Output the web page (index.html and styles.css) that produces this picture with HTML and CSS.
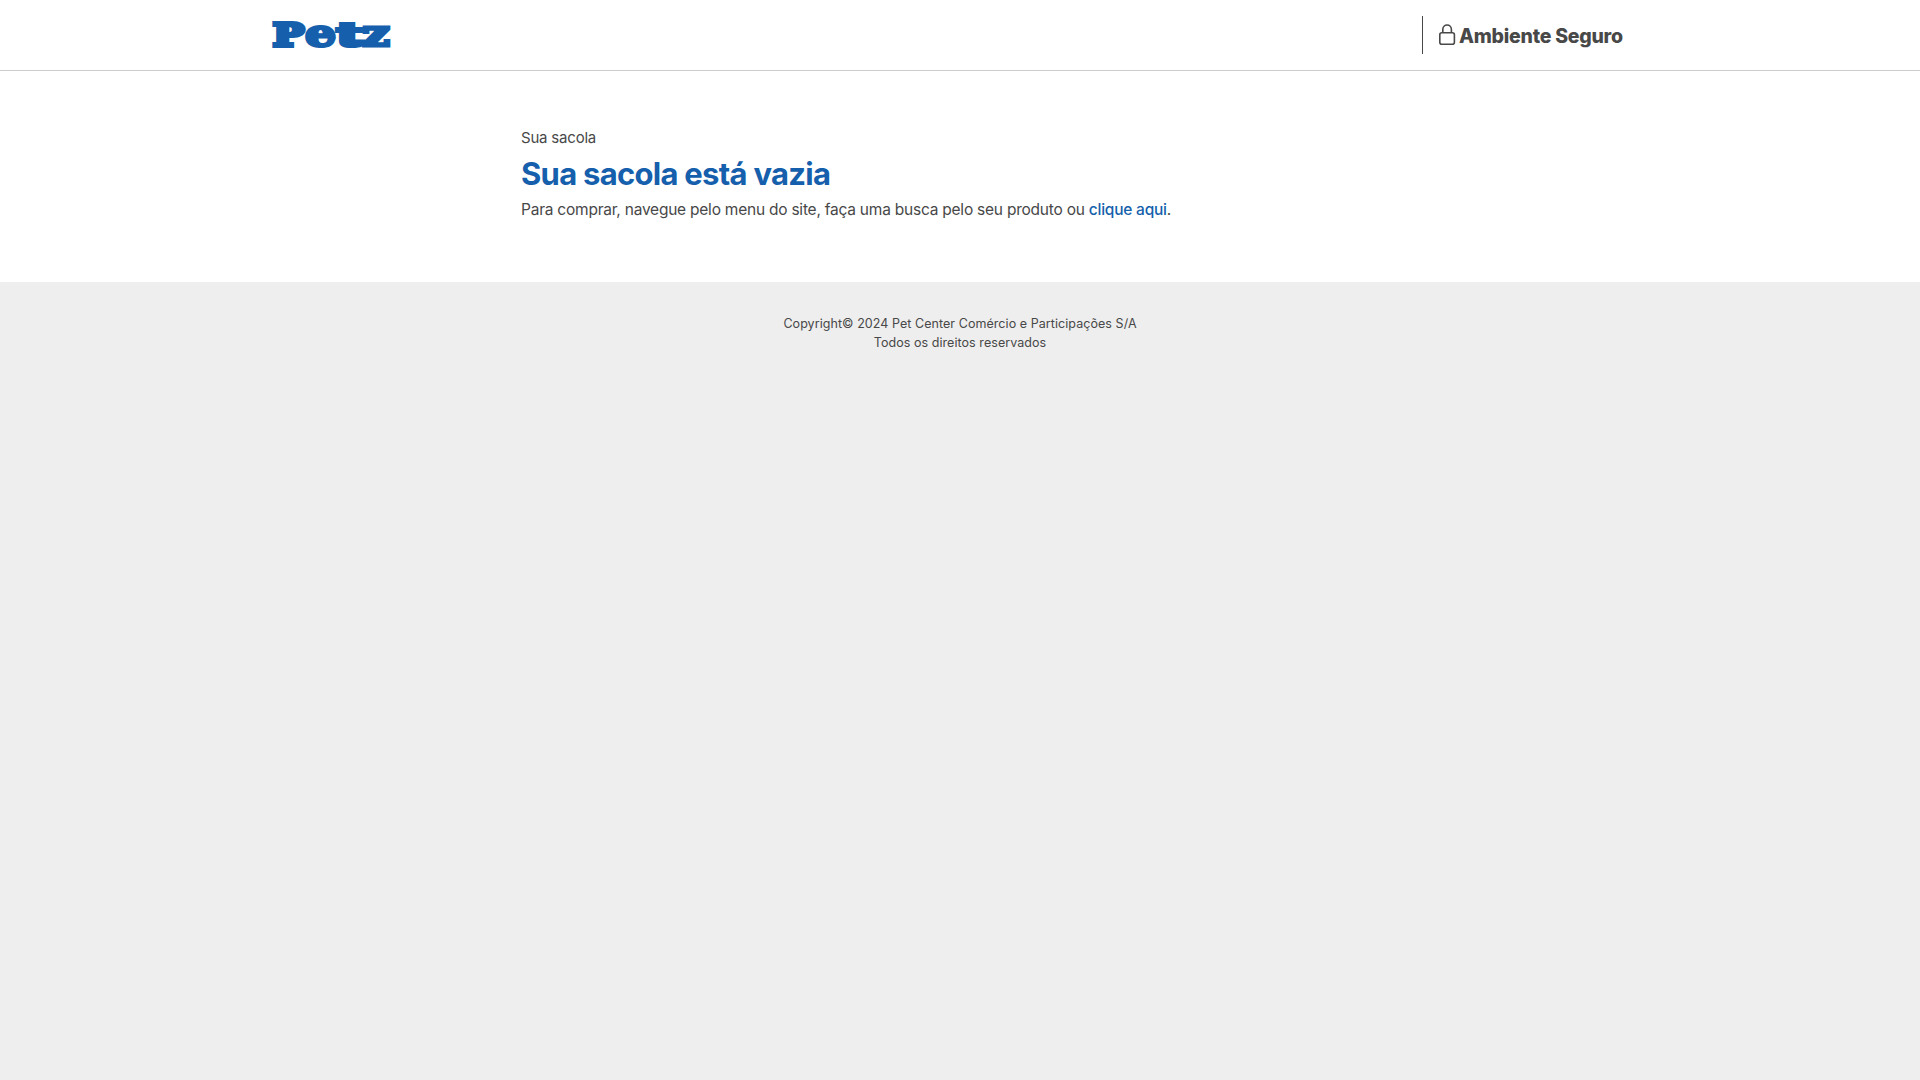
FILE: index.html
```html
<!DOCTYPE html>
<html lang="pt-BR">
<head>
<meta charset="utf-8">
<title>Petz - Sua sacola</title>
<link rel="stylesheet" href="styles.css">
</head>
<body>
<header class="header">
  <a class="logo">
    <svg width="124" height="60" viewBox="0 0 124 60" role="img" aria-label="Petz">
      <g class="wordmark">
        <text x="2" y="41" textLength="31" lengthAdjust="spacingAndGlyphs">P</text>
        <text class="small" x="34" y="41" textLength="31" lengthAdjust="spacingAndGlyphs">e</text>
        <text x="66" y="41" textLength="25" lengthAdjust="spacingAndGlyphs">t</text>
        <text class="small" x="91" y="41" textLength="28" lengthAdjust="spacingAndGlyphs">z</text>
      </g>
    </svg>
  </a>
  <div class="secure">
    <svg class="lock" width="18" height="22" viewBox="0 0 18 22" fill="none" stroke="#484848" stroke-width="1.6">
      <rect x="0.8" y="8.8" width="14.6" height="11.4" rx="2"/>
      <path d="M3.8 8.8V5.3a4.3 4.3 0 0 1 8.6 0v3.5"/>
    </svg>
    <span class="secure-text">Ambiente Seguro</span>
  </div>
</header>
<main class="bag">
  <div class="bag-content">
    <p class="crumb">Sua sacola</p>
    <h1 class="title">Sua sacola está vazia</h1>
    <p class="message">Para comprar, navegue pelo menu do site, faça uma busca pelo seu produto ou <a class="link">clique aqui</a>.</p>
  </div>
</main>
<footer class="footer">
  <p class="copyright">Copyright© 2024 Pet Center Comércio e Participações S/A</p>
  <p class="rights">Todos os direitos reservados</p>
</footer>
</body>
</html>
```
FILE: styles.css
```css
* { box-sizing: border-box; }
body { margin: 0; min-height: 1080px; background: #eee; color: #484848; font-family: Inter, "Liberation Sans", sans-serif; }
p, h1 { margin: 0; white-space: nowrap; }
.header { height: 71px; display: flex; justify-content: space-between; align-items: center; padding: 0 296px 0 271px; background: #fff; border-bottom: 1px solid #ccc; }
.logo { display: flex; }
.wordmark { font: 700 31px "DejaVu Serif", serif; fill: #155fac; stroke: #155fac; stroke-width: 4; }
.wordmark .small { font-size: 38px; stroke-width: 3; }
.secure { display: flex; align-items: center; height: 38px; width: 202px; padding-left: 16px; border-left: 1px solid #484848; }
.lock { flex: none; margin-right: 2px; }
.secure-text { padding-top: 2px; font-size: 19.5px; line-height: 24px; font-weight: 800; letter-spacing: -0.25px; white-space: nowrap; }
.bag { height: 211px; padding-top: 55px; background: #fff; }
.bag-content { width: 878px; margin: 0 auto; }
.crumb { font-size: 15px; line-height: 24px; letter-spacing: -0.2px; }
.title { font-size: 31px; line-height: 48px; font-weight: 750; letter-spacing: -0.72px; color: #155fac; }
.message { font-size: 15.5px; line-height: 24px; letter-spacing: -0.23px; }
.link { color: #155fac; font-weight: 500; }
.footer { padding-top: 32px; text-align: center; font-size: 12.5px; line-height: 19px; letter-spacing: 0.06px; }
```
